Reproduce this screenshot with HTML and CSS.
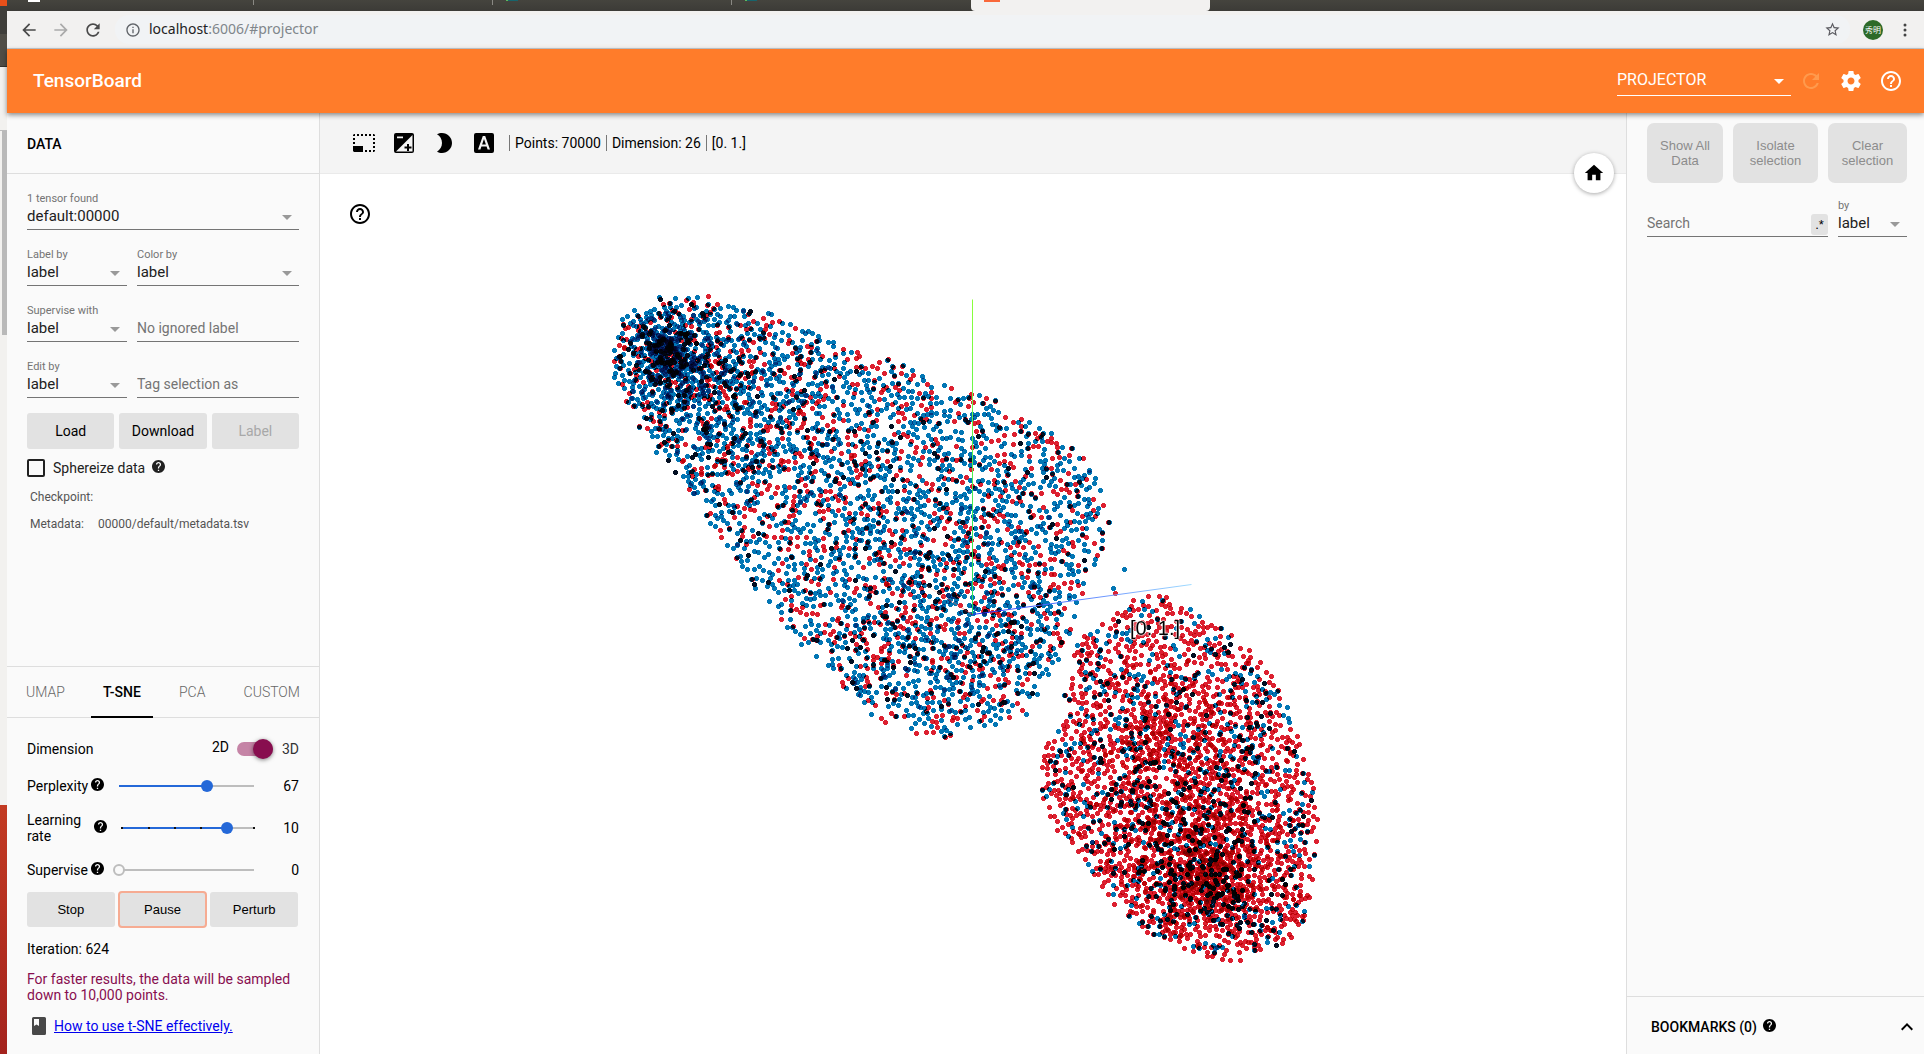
FILE: index.html
```html
<!DOCTYPE html>
<html lang="en">
<head>
<meta charset="utf-8">
<title>TensorBoard</title>
<link rel="stylesheet" href="styles.css">
</head>
<body>
<svg class="sprite" width="0" height="0" aria-hidden="true">
  <symbol id="help-solid" viewBox="0 0 24 24"><path d="M12 2C6.48 2 2 6.48 2 12s4.48 10 10 10 10-4.48 10-10S17.52 2 12 2zm1 17h-2v-2h2v2zm2.07-7.75l-.9.92C13.45 12.9 13 13.5 13 15h-2v-.5c0-1.1.45-2.1 1.17-2.83l1.24-1.26c.37-.36.59-.86.59-1.41 0-1.1-.9-2-2-2s-2 .9-2 2H8c0-2.21 1.79-4 4-4s4 1.79 4 4c0 .88-.36 1.68-.93 2.25z"/></symbol>
  <symbol id="help-outline" viewBox="0 0 24 24"><path d="M11 18h2v-2h-2v2zm1-16C6.48 2 2 6.48 2 12s4.48 10 10 10 10-4.48 10-10S17.52 2 12 2zm0 18c-4.41 0-8-3.59-8-8s3.59-8 8-8 8 3.59 8 8-3.59 8-8 8zm0-14c-2.21 0-4 1.79-4 4h2c0-1.1.9-2 2-2s2 .9 2 2c0 2-3 1.75-3 5h2c0-2.25 3-2.5 3-5 0-2.21-1.79-4-4-4z"/></symbol>
  <symbol id="refresh" viewBox="0 0 24 24"><path d="M17.65 6.35C16.2 4.9 14.21 4 12 4c-4.42 0-7.99 3.58-7.99 8s3.57 8 7.99 8c3.73 0 6.84-2.55 7.73-6h-2.08c-.82 2.33-3.04 4-5.65 4-3.31 0-6-2.69-6-6s2.69-6 6-6c1.66 0 3.14.69 4.22 1.78L13 11h7V4l-2.35 2.35z"/></symbol>
</svg>

<div class="desktop-edge" aria-hidden="true">
  <div class="edge-dark"></div>
  <div class="edge-bar"></div>
  <div class="edge-light"></div>
  <div class="edge-scroll"></div>
  <div class="edge-page"></div>
  <div class="edge-wall"></div>
</div>

<div class="window">
  <div class="tabstrip" aria-hidden="true">
    <div class="btab"><i class="fav fav-white"></i></div>
    <div class="btab"></div>
    <div class="btab"><i class="fav fav-teal"></i></div>
    <div class="btab last"><i class="fav fav-teal"></i></div>
    <div class="btab active"><i class="fav fav-orange"></i></div>
  </div>

  <div class="browser-bar">
    <button class="nav-btn" aria-label="Back"><svg viewBox="0 0 24 24"><path d="M20 11H7.83l5.59-5.59L12 4l-8 8 8 8 1.41-1.41L7.83 13H20v-2z"/></svg></button>
    <button class="nav-btn faded" aria-label="Forward"><svg viewBox="0 0 24 24"><path d="M12 4l-1.41 1.41L16.17 11H4v2h12.17l-5.58 5.59L12 20l8-8z"/></svg></button>
    <button class="nav-btn" aria-label="Reload"><svg viewBox="0 0 24 24"><use href="#refresh"/></svg></button>
    <div class="omnibox">
      <svg class="info" viewBox="0 0 24 24"><path d="M11 7h2v2h-2zm0 4h2v6h-2zm1-9C6.48 2 2 6.48 2 12s4.48 10 10 10 10-4.48 10-10S17.52 2 12 2zm0 18c-4.41 0-8-3.59-8-8s3.59-8 8-8 8 3.59 8 8-3.59 8-8 8z"/></svg>
      <div class="url">localhost<span>:6006/#projector</span></div>
      <button class="star" aria-label="Bookmark this page"><svg viewBox="0 0 24 24"><path d="M22 9.24l-7.19-.62L12 2 9.19 8.63 2 9.24l5.46 4.73L5.82 21 12 17.27 18.18 21l-1.63-7.03L22 9.24zM12 15.4l-3.76 2.27 1-4.28-3.32-2.88 4.38-.38L12 6.1l1.71 4.04 4.38.38-3.32 2.88 1 4.28L12 15.4z"/></svg></button>
    </div>
    <div class="avatar">秀明</div>
    <button class="more" aria-label="Menu"><svg viewBox="0 0 4 14"><circle cx="2" cy="2" r="1.5"/><circle cx="2" cy="7" r="1.5"/><circle cx="2" cy="12" r="1.5"/></svg></button>
  </div>

  <header class="appbar">
    <h1>TensorBoard</h1>
    <div class="select plugin"><select aria-label="Plugin"><option>PROJECTOR</option></select></div>
    <button class="icon-btn dim" aria-label="Reload data" disabled><svg viewBox="0 0 24 24"><use href="#refresh"/></svg></button>
    <button class="icon-btn" aria-label="Settings"><svg viewBox="0 0 24 24"><path d="M19.43 12.98c.04-.32.07-.64.07-.98s-.03-.66-.07-.98l2.11-1.65c.19-.15.24-.42.12-.64l-2-3.46c-.12-.22-.39-.3-.61-.22l-2.49 1c-.52-.4-1.08-.73-1.69-.98l-.38-2.65C14.46 2.18 14.25 2 14 2h-4c-.25 0-.46.18-.49.42l-.38 2.65c-.61.25-1.17.59-1.69.98l-2.49-1c-.23-.09-.49 0-.61.22l-2 3.46c-.13.22-.07.49.12.64l2.11 1.65c-.04.32-.07.65-.07.98s.03.66.07.98l-2.11 1.65c-.19.15-.24.42-.12.64l2 3.46c.12.22.39.3.61.22l2.49-1c.52.4 1.08.73 1.69.98l.38 2.65c.03.24.24.42.49.42h4c.25 0 .46-.18.49-.42l.38-2.65c.61-.25 1.17-.59 1.69-.98l2.49 1c.23.09.49 0 .61-.22l2-3.46c.12-.22.07-.49-.12-.64l-2.11-1.65zM12 15.5c-1.93 0-3.5-1.57-3.5-3.5s1.57-3.5 3.5-3.5 3.5 1.57 3.5 3.5-1.57 3.5-3.5 3.5z"/></svg></button>
    <button class="icon-btn" aria-label="Help"><svg viewBox="0 0 24 24"><use href="#help-outline"/></svg></button>
  </header>

  <main class="workspace">
    <aside class="left-pane">
      <h2 class="pane-title">DATA</h2>
      <div class="data-panel">
        <div class="field"><label for="tensor">1 tensor found</label><div class="select"><select id="tensor"><option>default:00000</option></select></div></div>
        <div class="field-row">
          <div class="field"><label for="labelby">Label by</label><div class="select"><select id="labelby"><option>label</option></select></div></div>
          <div class="field"><label for="colorby">Color by</label><div class="select"><select id="colorby"><option>label</option></select></div></div>
        </div>
        <div class="field-row">
          <div class="field"><label for="superwith">Supervise with</label><div class="select"><select id="superwith"><option>label</option></select></div></div>
          <div class="field"><input type="text" aria-label="Ignored label" placeholder="No ignored label"></div>
        </div>
        <div class="field-row">
          <div class="field"><label for="editby">Edit by</label><div class="select"><select id="editby"><option>label</option></select></div></div>
          <div class="field"><input type="text" aria-label="Tag selection as" placeholder="Tag selection as"></div>
        </div>
        <div class="buttons">
          <button>Load</button><button>Download</button><button disabled>Label</button>
        </div>
        <div class="check-row">
          <input type="checkbox" id="sphere"><label for="sphere">Sphereize data</label>
          <svg class="tip" viewBox="2 2 20 20"><use href="#help-solid" width="24" height="24"/></svg>
        </div>
        <dl class="meta">
          <div><dt>Checkpoint:</dt><dd></dd></div>
          <div><dt>Metadata:</dt><dd>00000/default/metadata.tsv</dd></div>
        </dl>
      </div>

      <nav class="tabs">
        <button>UMAP</button><button class="selected">T-SNE</button><button>PCA</button><button>CUSTOM</button>
      </nav>
      <section class="tsne">
        <div class="dimension">
          <span class="name">Dimension</span>
          <span class="two-d">2D</span>
          <input type="checkbox" class="toggle" id="dim" checked>
          <label for="dim">3D</label>
        </div>
        <div class="slider-row">
          <label for="perp"><span>Perplexity</span><svg class="tip" viewBox="2 2 20 20"><use href="#help-solid" width="24" height="24"/></svg></label>
          <input type="range" id="perp" min="2" max="100" value="66" style="--at:65%">
          <output>67</output>
        </div>
        <div class="slider-row tall">
          <label for="rate"><span>Learning rate</span><svg class="tip" viewBox="2 2 20 20"><use href="#help-solid" width="24" height="24"/></svg></label>
          <input type="range" class="ticked" id="rate" min="-3" max="2" value="1" style="--at:80%">
          <output>10</output>
        </div>
        <div class="slider-row">
          <label for="sup"><span>Supervise</span><svg class="tip" viewBox="2 2 20 20"><use href="#help-solid" width="24" height="24"/></svg></label>
          <input type="range" class="empty" id="sup" min="0" max="100" value="0" style="--at:0%">
          <output>0</output>
        </div>
        <div class="buttons run">
          <button>Stop</button><button class="focused">Pause</button><button>Perturb</button>
        </div>
        <p>Iteration: 624</p>
        <p class="notice">For faster results, the data will be sampled down to 10,000 points.</p>
        <p class="howto"><svg viewBox="0 0 14 18"><path fill-rule="evenodd" d="M1.500 0H12.500Q14 0 14 1.500V16.500Q14 18 12.500 18H1.500Q0 18 0 16.500V1.500Q0 0 1.500 0zM2 2V9L4.500 7.500 7 9V2z"/></svg><a href="#tsne">How to use t-SNE effectively.</a></p>
      </section>
    </aside>

    <section class="stage">
      <div class="toolbar">
        <button class="icon-btn" aria-label="Bounding box selection"><svg viewBox="0 0 24 24"><path d="M2 3h1v2H1V4zM5 3h2v2H5zM9 3h2v2H9zM13 3h2v2h-2zM17 3h2v2h-2zM21 3h1l1 1v1h-2zM1 7h2v2H1zM21 7h2v2h-2zM1 11h2v2H1zM21 11h2v2h-2zM21 15h2v2h-2zM1 15h10v6H2l-1-1zM13 19h2v2h-2zM17 19h2v2h-2zM21 19h2v1l-1 1h-1z"/></svg></button>
        <button class="icon-btn" aria-label="Edit selection contrast"><svg viewBox="0 0 24 24"><path d="M4 2h16q2 0 2 2v16q0 2-2 2H4q-2 0-2-2V4q0-2 2-2zM5 5.500v1.700h6V5.500zM20.500 4L4 20.500h16.500z" fill-rule="evenodd"/><path d="M15 13h2v2.500h2.500v2H17V20h-2v-2.500h-2.500v-2H15z"/></svg></button>
        <button class="icon-btn" aria-label="Night mode"><svg viewBox="0 0 24 24"><path d="M10 2c-1.820 0-3.530.5-5 1.350C7.990 5.080 10 8.300 10 12s-2.010 6.920-5 8.650C6.470 21.500 8.180 22 10 22c5.520 0 10-4.480 10-10S15.520 2 10 2z"/></svg></button>
        <button class="icon-btn" aria-label="3D labels"><svg viewBox="0 0 24 24"><path d="M4 2h16q2 0 2 2v16q0 2-2 2H4q-2 0-2-2V4q0-2 2-2zM10.800 5L6 18.500h2.400l1-3h5.200l1 3H18L13.200 5zM12 8l1.900 5.500h-3.800z" fill-rule="evenodd"/></svg></button>
        <div class="stats"><span>Points: 70000</span><span>Dimension: 26</span><span>[0. 1.]</span></div>
      </div>
      <div class="plot">
        <canvas id="scatter" aria-label="t-SNE projection of the sampled points"></canvas>
        <div class="point-label">[0. 1.]</div>
        <button class="icon-btn plot-help" aria-label="Plot help"><svg viewBox="0 0 24 24"><use href="#help-outline"/></svg></button>
        <button class="home" aria-label="Reset zoom"><svg viewBox="0 0 24 24"><path d="M10 20v-6h4v6h5v-8h3L12 3 2 12h3v8z"/></svg></button>
      </div>
    </section>

    <aside class="right-pane">
      <div class="actions"><button disabled>Show All Data</button><button disabled>Isolate selection</button><button disabled>Clear selection</button></div>
      <div class="search-row">
        <div class="search"><input type="text" placeholder="Search" aria-label="Search"><button aria-label="Regex mode">.*</button></div>
        <div class="field"><label for="searchby">by</label><div class="select"><select id="searchby"><option>label</option></select></div></div>
      </div>
      <div class="bookmarks">
        <h2>BOOKMARKS (0)</h2>
        <svg class="tip" viewBox="2 2 20 20"><use href="#help-solid" width="24" height="24"/></svg>
        <button aria-label="Expand bookmarks"><svg viewBox="0 0 24 24"><path d="M12 8l-6 6 1.410 1.410L12 10.830l4.590 4.580L18 14z"/></svg></button>
      </div>
    </aside>
  </main>
</div>
<script src="projector.js"></script>
</body>
</html>
```
FILE: styles.css
```css
* { box-sizing: border-box; }
body {
  margin: 0;
  height: 100vh;
  display: flex;
  overflow: hidden;
  background: #fff;
  color: #000;
  font: 14px/16px Roboto, sans-serif;
}
h1, h2, p, dl, dd { margin: 0; }
button, input, select { font: inherit; color: inherit; margin: 0; }
button { border: 0; padding: 0; background: none; }
svg { display: block; fill: currentColor; }
.sprite { position: absolute; }

/* Windows behind this one */
.desktop-edge { width: 7px; display: flex; flex-direction: column; background: #f2f1ef; }
.edge-dark { height: 34px; background: linear-gradient(#e8501a 6px, #3f3e3a 6px); }
.edge-bar { height: 33px; background: #504d46; border-bottom: 1px solid #33322e; }
.edge-light { height: 64px; border-bottom: 1px solid #bbb; }
.edge-scroll { height: 204px; margin-left: 2px; background: #b9b9b9; }
.edge-page { flex: 470; }
.edge-wall { flex: 249; background: linear-gradient(#c23a22, #a4231d); }

.window { flex: 1; min-width: 0; display: flex; flex-direction: column; }

/* Browser frame */
.tabstrip { display: flex; height: 11px; padding-left: 8px; background: linear-gradient(#45443e, #3c3b37); }
.btab { width: 239px; height: 5px; padding-left: 13px; border-right: 1px solid #8a8984; }
.btab.last { border-right: 0; }
.btab.active { height: 11px; background: #f2f1f0; border: 0; border-radius: 0 0 4px 4px; }
.fav { display: block; width: 12px; height: 1px; }
.fav-white { background: #fff; height: 2px; }
.fav-teal { background: linear-gradient(to right, #5db85b 2px, #17646c 2px); }
.fav-orange { width: 16px; height: 2px; background: #f9683a; }
.browser-bar {
  display: flex;
  align-items: center;
  height: 38px;
  padding: 0 7px 0 6px;
  background: #f2f1f0;
  border-bottom: 1px solid #c8ccd0;
}
.nav-btn { width: 32px; display: grid; place-items: center; color: #4a4a4a; }
.nav-btn svg { width: 20px; height: 20px; }
.nav-btn.faded { color: #aaa; }
.omnibox {
  flex: 1;
  display: flex;
  align-items: center;
  height: 29px;
  margin-left: 6px;
  padding: 0 9px 0 10px;
  border-radius: 14px;
  background: #f1f3f5;
}
.info { width: 16px; height: 16px; color: #5f6368; }
.url { flex: 1; margin: -2px 0 0 8px; font: 14px/20px "Noto Sans", sans-serif; color: #222; }
.url span { color: #80868b; }
.star svg { width: 17px; height: 17px; color: #5a5a60; }
.avatar {
  width: 20px; height: 20px; margin-left: 13px;
  border-radius: 50%;
  background: #2d6a28; color: #fff;
  font: 8px/20px "Noto Sans CJK JP", sans-serif;
  text-align: center;
}
.more { width: 24px; margin-left: 10px; display: grid; place-items: center; color: #444; }
.more svg { width: 4px; height: 14px; }

/* TensorBoard header */
.appbar {
  position: relative;
  z-index: 2;
  display: flex;
  align-items: center;
  height: 64px;
  padding: 0 13px 0 26px;
  background: #ff7c2a;
  color: #fff;
  box-shadow: 0 2px 5px rgba(0, 0, 0, .45);
}
.appbar h1 { flex: 1; font-size: 19px; line-height: 24px; font-weight: 500; }
.icon-btn { width: 40px; height: 40px; display: grid; place-items: center; }
.icon-btn svg { width: 24px; height: 24px; }
.icon-btn.dim { color: #ff9a4d; }

.select { position: relative; border-bottom: 1px solid #747474; color: #212121; }
.select::after {
  content: "";
  position: absolute;
  right: 7px;
  top: 50%;
  border: 5px solid transparent;
  border-top-color: #999;
  border-bottom: 0;
  margin-top: -2px;
  pointer-events: none;
}
.select select {
  display: block;
  width: 100%;
  height: 24px;
  padding: 0 0 2px;
  border: 0;
  background: none;
  appearance: none;
  font-size: 15px;
  line-height: 22px;
}
.select.plugin { width: 174px; border-color: #fff; color: #fff; }
.plugin::after { border-top-color: #fff; }
.plugin select { height: 28px; font-size: 16px; }

.workspace {
  flex: 1;
  min-height: 0;
  display: grid;
  grid-template-columns: 313px minmax(0, 1fr) 298px;
}
.left-pane, .right-pane { display: flex; flex-direction: column; background: #fafafa; min-height: 0; }
.left-pane { border-right: 1px solid #dedede; }
.pane-title {
  height: 61px;
  padding-left: 20px;
  border-bottom: 1px solid #dedede;
  font-size: 14px;
  line-height: 62px;
  font-weight: 500;
}
.data-panel { flex: 1; padding: 0 20px; }
.field { height: 56px; display: flex; flex-direction: column; justify-content: flex-end; }
.field label { font-size: 11px; line-height: 12px; color: #747474; }
.field-row { display: grid; grid-template-columns: 100px 1fr; gap: 10px; }
.field input, .search input {
  width: 100%;
  height: 25px;
  padding: 0 0 2px;
  border: 0;
  border-bottom: 1px solid #747474;
  background: none;
}
::placeholder { color: #747474; opacity: 1; }
.buttons { display: grid; grid-template-columns: repeat(3, 1fr); gap: 5px; margin-top: 15px; }
.buttons button { height: 36px; border-radius: 3px; background: #e2e2e2; }
.buttons button:disabled { color: #a8a8a8; }
.check-row { display: flex; align-items: center; height: 18px; margin-top: 10px; color: #212121; }
.check-row input { appearance: none; width: 18px; height: 18px; border: 2px solid #212121; border-radius: 2px; }
.check-row label { margin: 0 7px 0 8px; }
.tip { width: 13px; height: 13px; flex: none; margin-bottom: 3px; }
.meta { margin: 7px 0 0 3px; font-size: 12px; line-height: 27px; color: #545454; }
.meta div { display: flex; height: 27px; }
.meta dt { min-width: 68px; }

.tabs {
  display: flex;
  justify-content: space-between;
  height: 52px;
  padding: 0 7px;
  border-top: 1px solid #dedede;
  border-bottom: 1px solid #dedede;
}
.tabs button { padding: 0 12px; font-weight: 300; color: #666; border-bottom: 2px solid transparent; height: 51px; }
.tabs .selected { font-weight: 500; color: #000; border-color: #000; }
.tsne { padding: 12px 20px 20px; }
.dimension { display: flex; align-items: center; height: 38px; }
.dimension .name { flex: 1; }
.dimension .two-d { margin-bottom: 5px; }
.dimension label { color: #333; }
.toggle {
  appearance: none;
  position: relative;
  width: 36px;
  height: 14px;
  margin: 0 9px 0 8px;
  border-radius: 7px;
  background: #c584a6;
}
.toggle::before {
  content: "";
  position: absolute;
  right: 0;
  top: -3px;
  width: 20px;
  height: 20px;
  border-radius: 50%;
  background: #880e4f;
  box-shadow: 0 1px 4px rgba(0, 0, 0, .5);
}
.slider-row { display: grid; grid-template-columns: 86px 147px 1fr; align-items: center; height: 36px; }
.slider-row.tall { height: 48px; }
.slider-row label { display: flex; align-items: center; gap: 3px; }
.tall label span { width: 64px; }
.slider-row output { text-align: right; }
input[type="range"] {
  --fill: #2468d8;
  appearance: none;
  width: 100%;
  height: 12px;
  background: linear-gradient(to right, transparent 6px, var(--fill) 6px, var(--fill) var(--at), #bdbdbd var(--at), #bdbdbd calc(100% - 6px), transparent calc(100% - 6px)) center / 100% 2px no-repeat;
}
input.empty { --fill: #bdbdbd; }
input.ticked {
  background:
    linear-gradient(#111, #111) 8px 5px / 2px 2px no-repeat,
    linear-gradient(#111, #111) 35px 5px / 2px 2px no-repeat,
    linear-gradient(#111, #111) 61px 5px / 2px 2px no-repeat,
    linear-gradient(#111, #111) 87px 5px / 2px 2px no-repeat,
    linear-gradient(#111, #111) 140px 5px / 2px 2px no-repeat,
    linear-gradient(to right, transparent 8px, var(--fill) 8px, var(--fill) var(--at), #bdbdbd var(--at), #bdbdbd calc(100% - 6px), transparent calc(100% - 6px)) center / 100% 2px no-repeat;
}
input[type="range"]::-webkit-slider-thumb {
  appearance: none;
  width: 12px;
  height: 12px;
  border-radius: 50%;
  background: var(--fill);
}
input.empty::-webkit-slider-thumb { background: #fafafa; border: 2px solid #bdbdbd; }
.run { margin: 4px 1px 0 0; gap: 4px; font: 13px/16px "Liberation Sans", sans-serif; }
.run button { height: 35px; }
.run .focused { outline: 2px solid #f6ab92; outline-offset: -1px; }
.tsne p { margin-top: 14px; }
.tsne .notice { color: #880e4f; }
.tsne .howto { display: flex; align-items: center; gap: 8px; margin-top: 15px; padding-left: 5px; }
.howto svg { width: 14px; height: 18px; margin: -1px 0; color: #484848; }
.howto a { color: #00e; }

.stage { display: flex; flex-direction: column; }
.toolbar {
  display: flex;
  align-items: center;
  height: 61px;
  padding-left: 24px;
  background: #f4f4f4;
  border-bottom: 1px solid #eaeaea;
}
.stats { display: flex; margin-left: 5px; }
.stats span { padding: 0 5px; border-left: 1px solid #777; }
.plot { flex: 1; position: relative; min-height: 0; }
#scatter { position: absolute; inset: 0; width: 100%; height: 100%; }
.point-label {
  position: absolute;
  left: calc(50% + 157px);
  top: calc(50% + 2px);
  font: 20px/24px "Liberation Sans", sans-serif;
  text-shadow: 0 0 2px #fff, 0 0 2px #fff, 0 0 2px #fff, 0 0 1px #fff;
}
.plot-help { position: absolute; left: 20px; top: 20px; }
.home {
  position: absolute;
  right: 12px;
  top: -21px;
  width: 40px;
  height: 40px;
  display: grid;
  place-items: center;
  border-radius: 50%;
  background: #fff;
  box-shadow: 0 1px 4px rgba(0, 0, 0, .35);
}
.home svg { width: 22px; height: 22px; }

.right-pane { border-left: 1px solid #dedede; }
.actions { display: grid; grid-template-columns: 76fr 85fr 79fr; gap: 10px; padding: 10px 17px 0 20px; }
.actions button {
  height: 60px;
  padding: 0 6px;
  border-radius: 7px;
  background: #e2e2e2;
  color: #8c8c8c;
  font: 13px/15px "Liberation Sans", sans-serif;
}
.search-row { display: grid; grid-template-columns: 1fr 69px; gap: 10px; padding: 0 17px 0 20px; margin-top: -2px; }
.search { display: flex; align-items: flex-end; border-bottom: 1px solid #747474; }
.search input { border: 0; height: 24px; }
.search button { width: 17px; height: 21px; margin-bottom: 1px; flex: none; border-radius: 3px; background: #e2e2e2; font: 13px/15px "Liberation Sans", sans-serif; }
.bookmarks {
  display: flex;
  align-items: center;
  height: 58px;
  margin-top: auto;
  padding: 3px 5px 0 24px;
  border-top: 1px solid #dedede;
}
.bookmarks h2 { font-size: 14px; line-height: 16px; font-weight: 500; margin-right: 6px; }
.bookmarks button { margin-left: auto; }
.bookmarks button svg { width: 24px; height: 24px; }
```
FILE: projector.js
```js
// Draws the embedding, with the origin of the axes in the middle of the canvas.
const canvas = document.getElementById('scatter');
const ctx = canvas.getContext('2d');

const BLUE = '#0276b4';
const RED = '#dc2030';

let seed = 20117;
function random() {
  seed = (seed + 0x6d2b79f5) | 0;
  let t = Math.imul(seed ^ (seed >>> 15), 1 | seed);
  t = (t + Math.imul(t ^ (t >>> 7), 61 | t)) ^ t;
  return ((t ^ (t >>> 14)) >>> 0) / 4294967296;
}

const clusters = [
  {
    outline: [[-363,-276],[-352,-297],[-317,-318],[-287,-322],[-238,-314],[-204,-301],[-164,-283],[-127,-269],[-73,-252],[-43,-239],[10,-221],[57,-197],[102,-169],[121,-141],[138,-106],[138,-88],[130,-67],[121,-44],[107,-14],[97,16],[85,56],[55,101],[15,114],[-21,123],[-51,123],[-82,112],[-108,97],[-139,70],[-157,46],[-193,8],[-218,-26],[-239,-61],[-268,-87],[-274,-112],[-298,-136],[-317,-161],[-332,-181],[-345,-207],[-359,-236]],
    spread: 2700, dominant: BLUE, minor: RED, minorShare: 0.32, pairShare: 0.13,
    cores: [
      { x: -307, y: -263, s: 15, n: 200, minorShare: 0.1 },
      { x: -297, y: -250, s: 38, n: 430, minorShare: 0.16 },
      { x: -30, y: 0, s: 60, n: 420, minorShare: 0.35 },
      { x: -245, y: -205, s: 70, n: 420, minorShare: 0.25 }
    ]
  },
  {
    outline: [[160,-17],[189,-19],[217,-6],[244,11],[272,29],[299,59],[315,93],[325,119],[337,156],[344,196],[345,239],[340,279],[324,323],[300,339],[260,351],[224,341],[180,323],[134,286],[110,249],[80,214],[66,174],[70,134],[87,109],[94,69],[102,26],[134,3]],
    spread: 1750, dominant: RED, minor: BLUE, minorShare: 0.19, pairShare: 0.11,
    cores: [
      { x: 238, y: 266, s: 18, n: 190, minorShare: 0.1 },
      { x: 226, y: 252, s: 45, n: 720, minorShare: 0.1 },
      { x: 200, y: 150, s: 62, n: 560, minorShare: 0.17 }
    ]
  }
];

function inside(poly, x, y) {
  let hit = false;
  for (let i = 0, j = poly.length - 1; i < poly.length; j = i++) {
    const [xi, yi] = poly[i];
    const [xj, yj] = poly[j];
    if ((yi > y) !== (yj > y) && x < (xj - xi) * (y - yi) / (yj - yi) + xi) hit = !hit;
  }
  return hit;
}

function normal() {
  return Math.sqrt(-2 * Math.log(1 - random())) * Math.cos(2 * Math.PI * random());
}

// A second, jittered test thins the cloud out towards its rim.
function accepted(poly, x, y) {
  return inside(poly, x, y) && inside(poly, x + normal() * 12, y + normal() * 12);
}

function buildPoints() {
  const points = [];
  for (const c of clusters) {
    const xs = c.outline.map(p => p[0]);
    const ys = c.outline.map(p => p[1]);
    const x0 = Math.min(...xs), x1 = Math.max(...xs);
    const y0 = Math.min(...ys), y1 = Math.max(...ys);
    const taken = new Set();
    const add = (x, y, minorShare, pairShare) => {
      const color = random() < minorShare ? c.minor : c.dominant;
      points.push([x, y, color]);
      if (random() < pairShare) {
        points.push([x + Math.round(random() * 2 - 1), y + Math.round(random()), color === RED ? BLUE : RED]);
      }
    };
    let placed = 0;
    for (let tries = 0; placed < c.spread && tries < 60000; tries++) {
      const x = Math.round(x0 + random() * (x1 - x0));
      const y = Math.round(y0 + random() * (y1 - y0));
      if (!accepted(c.outline, x, y)) continue;
      let free = true;
      for (let dx = -3; dx <= 3 && free; dx++) {
        for (let dy = -3; dy <= 3; dy++) {
          if (dx * dx + dy * dy < 13 && taken.has((x + dx) + ',' + (y + dy))) { free = false; break; }
        }
      }
      if (!free) continue;
      taken.add(x + ',' + y);
      add(x, y, c.minorShare, c.pairShare);
      placed++;
    }
    for (const core of c.cores) {
      for (let i = 0; i < core.n; i++) {
        const x = Math.round(core.x + normal() * core.s);
        const y = Math.round(core.y + normal() * core.s);
        if (accepted(c.outline, x, y)) add(x, y, core.minorShare, 0.08);
      }
    }
  }
  points.push([151, -45, BLUE], [140, -26, BLUE], [142, -21, RED]);
  return points;
}

const points = buildPoints();

function axis(x, y, from, to) {
  const g = ctx.createLinearGradient(0, 0, x, y);
  g.addColorStop(0, from);
  g.addColorStop(1, to);
  ctx.strokeStyle = g;
  ctx.beginPath();
  ctx.moveTo(0, 0);
  ctx.lineTo(x, y);
  ctx.stroke();
}

function draw() {
  canvas.width = canvas.clientWidth;
  canvas.height = canvas.clientHeight;
  ctx.translate(Math.floor(canvas.width / 2), Math.floor(canvas.height / 2));
  ctx.globalCompositeOperation = 'multiply';
  for (const [x, y, color] of points) {
    ctx.fillStyle = color;
    ctx.beginPath();
    ctx.rect(x - 2, y - 1, 5, 3);
    ctx.rect(x - 1, y - 2, 3, 5);
    ctx.fill();
  }
  ctx.globalCompositeOperation = 'source-over';
  ctx.save();
  ctx.translate(-0.5, 0.5);
  ctx.lineWidth = 1;
  axis(0, -315, '#20e060', '#8cff3c');
  axis(219, -30, '#2030ff', '#a0dcff');
  axis(-48, -30, 'rgba(255,32,32,0.6)', 'rgba(255,180,140,0.3)');
  ctx.restore();
}

draw();
window.addEventListener('resize', draw);
```
